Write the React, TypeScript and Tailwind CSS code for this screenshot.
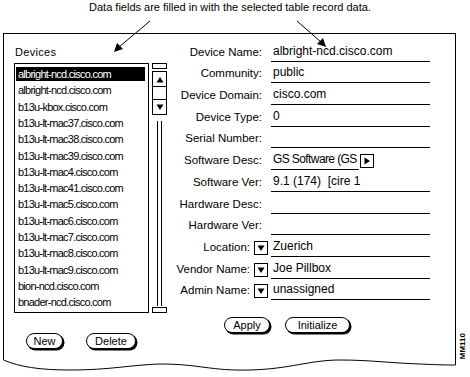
import React from "react";

const devices = [
  "albright-ncd.cisco.com",
  "albright-ncd.cisco.com",
  "b13u-kbox.cisco.com",
  "b13u-lt-mac37.cisco.com",
  "b13u-lt-mac38.cisco.com",
  "b13u-lt-mac39.cisco.com",
  "b13u-lt-mac4.cisco.com",
  "b13u-lt-mac41.cisco.com",
  "b13u-lt-mac5.cisco.com",
  "b13u-lt-mac6.cisco.com",
  "b13u-lt-mac7.cisco.com",
  "b13u-lt-mac8.cisco.com",
  "b13u-lt-mac9.cisco.com",
  "bion-ncd.cisco.com",
  "bnader-ncd.cisco.com",
];

type Field = { label: string; value: string; kind?: "drop" | "more" };

const fields: Field[] = [
  { label: "Device Name:", value: "albright-ncd.cisco.com" },
  { label: "Community:", value: "public" },
  { label: "Device Domain:", value: "cisco.com" },
  { label: "Device Type:", value: "0" },
  { label: "Serial Number:", value: "" },
  { label: "Software Desc:", value: "GS Software (GS", kind: "more" },
  { label: "Software Ver:", value: "9.1 (174)  [cire 1" },
  { label: "Hardware Desc:", value: "" },
  { label: "Hardware Ver:", value: "" },
  { label: "Location:", value: "Zuerich", kind: "drop" },
  { label: "Vendor Name:", value: "Joe Pillbox", kind: "drop" },
  { label: "Admin Name:", value: "unassigned", kind: "drop" },
];

function PillButton({ label, width }: { label: string; width: string }) {
  return (
    <button
      className={`${width} h-[16px] rounded-full border border-black bg-white text-[11px] leading-[13px] text-black shadow-[1.5px_1.5px_0_0_#000]`}
    >
      {label}
    </button>
  );
}

function ArrowBox({ dir }: { dir: "down" | "right" }) {
  return (
    <div className="w-[14px] h-[14px] border border-black flex items-center justify-center">
      <svg width="8" height="8" viewBox="0 0 8 8">
        {dir === "down" && <polygon points="0.5,1.5 7.5,1.5 4,7" fill="#000" />}
        {dir === "right" && <polygon points="1.5,0.5 1.5,7.5 7,4" fill="#000" />}
      </svg>
    </div>
  );
}

export default function App() {
  return (
    <div
      className="relative w-[470px] h-[377px] bg-white text-black overflow-hidden"
      style={{ fontFamily: '"Liberation Sans", Arial, sans-serif' }}
    >
      {/* Caption */}
      <div className="w-[460px] h-[33px] pt-[1px] text-center text-[11px] leading-[13px]">
        Data fields are filled in with the selected table record data.
      </div>

      {/* Callout arrows */}
      <svg className="absolute left-0 top-0" width="470" height="60">
        <line x1="150" y1="21" x2="119" y2="47" stroke="#000" strokeWidth="1" />
        <polygon points="114,52 117,43 123,49" fill="#000" />
        <line x1="297" y1="21" x2="321" y2="42" stroke="#000" strokeWidth="1" />
        <polygon points="326,47 317,44 323,38" fill="#000" />
      </svg>

      {/* Frame */}
      <div className="ml-[3px] w-[453px] h-[324px] border-t border-l border-r border-black flex">
        {/* Devices panel */}
        <div className="pl-[10px] pt-[12px] flex flex-col">
          <div className="text-[11px] leading-[13px] tracking-[0.3px] pl-[1px]">Devices</div>
          <div className="mt-[4px] flex">
            <div className="w-[135px] h-[250px] border border-black pt-[2px]">
              {devices.map((d, i) => (
                <div key={i} className="h-[16.3px] py-[1.1px] pl-[1px] pr-[3px]">
                  <div
                    className={`h-[14px] pl-[2px] text-[11px] leading-[14px] tracking-[-0.75px] whitespace-nowrap ${
                      i === 0 ? "bg-black text-white" : ""
                    }`}
                  >
                    {d}
                  </div>
                </div>
              ))}
            </div>
            <div className="ml-[3px] w-[15px] flex flex-col items-center">
              <div className="w-[15px] h-[6px] border border-black" />
              <div className="mt-[2px] w-[15px] border border-black flex flex-col">
                <div className="h-[15px] flex items-center justify-center border-b border-black">
                  <svg width="8" height="7" viewBox="0 0 8 7">
                    <polygon points="0.5,6.5 7.5,6.5 4,1" fill="#000" />
                  </svg>
                </div>
                <div className="h-[13px] border-b border-black" />
                <div className="h-[14px] flex items-center justify-center">
                  <svg width="8" height="7" viewBox="0 0 8 7">
                    <polygon points="0.5,0.5 7.5,0.5 4,6" fill="#000" />
                  </svg>
                </div>
              </div>
              <div className="mt-[6px] w-[5px] h-[185px] border-l border-r border-black" />
              <div className="mt-[1px] w-[15px] h-[6px] border border-black" />
            </div>
          </div>
          <div className="mt-[20px] ml-[12px] flex gap-[23px]">
            <PillButton label="New" width="w-[37px]" />
            <PillButton label="Delete" width="w-[50px]" />
          </div>
        </div>

        {/* Record form */}
        <div className="pt-[6px] flex flex-col">
          {fields.map((f) => (
            <div key={f.label} className="h-[21.7px] flex items-end">
              <div
                className={`w-[101px] flex items-center justify-end pb-[3px] text-[11.5px] leading-[13px] whitespace-nowrap ${
                  f.kind === "drop" ? "pr-0" : "pr-[6px]"
                }`}
              >
                <span>{f.label}</span>
                {f.kind === "drop" && (
                  <div className="ml-[4px] mb-[-1px]">
                    <ArrowBox dir="down" />
                  </div>
                )}
              </div>
              {f.kind === "more" ? (
                <div className="ml-[3px] flex items-end">
                  <div className="w-[88px] h-[17px] pl-[2px] pb-[3px] border-b border-black text-[12px] leading-[13px] tracking-[-0.6px] whitespace-nowrap">
                    {f.value}
                  </div>
                  <div className="ml-[1px] mb-[2px]">
                    <ArrowBox dir="right" />
                  </div>
                </div>
              ) : (
                <div className="ml-[3px] w-[159px] h-[17px] pl-[2px] pb-[3px] border-b border-black text-[12px] leading-[13px] whitespace-pre">
                  {f.value}
                </div>
              )}
            </div>
          ))}
          <div className="mt-[17px] ml-[57px] flex gap-[15px]">
            <PillButton label="Apply" width="w-[46px]" />
            <PillButton label="Initialize" width="w-[65px]" />
          </div>
        </div>
      </div>

      {/* Torn bottom edge */}
      <svg className="block" width="470" height="18" viewBox="0 0 470 18">
        <path
          d="M3.5 0 V3 C 20 10, 40 13, 70 13 C 110 13, 130 8, 160 7 C 200 7, 210 14, 250 13 C 290 12, 310 3, 340 3 C 370 3, 390 6, 420 7 C 440 8, 450 8, 455.5 8 V0"
          fill="none"
          stroke="#000"
          strokeWidth="1"
        />
      </svg>

      {/* Figure id */}
      <div className="absolute left-[458px] top-[333px] text-[8px] leading-[9px] font-bold [writing-mode:vertical-rl] rotate-180">
        MM110
      </div>
    </div>
  );
}
